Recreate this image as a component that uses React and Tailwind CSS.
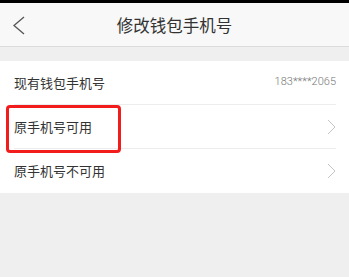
import React from "react";

function Chevron() {
    return (
        <svg width="9" height="16" viewBox="0 0 9 16" className="shrink-0">
            <path d="M1 1 L8 8 L1 15" fill="none" stroke="#c4c4c4" strokeWidth="1" />
        </svg>
    );
}

function Row({ label, right, last, children }) {
    return (
        <div className="relative pl-[14px] pr-[13px]">
            <div
                className={
                    "flex h-[44px] items-center justify-between " +
                    (last ? "" : "border-b border-[#ececec]")
                }
            >
                <span className="text-[13px] text-[#333]">{label}</span>
                {right}
            </div>
            {children}
        </div>
    );
}

export default function App() {
    return (
        <div
            className="min-h-[277px] w-[349px] bg-[#efefef]"
            style={{ fontFamily: '"Noto Sans CJK SC", "Noto Sans", sans-serif' }}
        >
            <div className="h-[3px] bg-black" />
            <div className="relative flex h-[44px] items-center justify-center border-b border-[#dcdcdc] bg-[#f8f8f8]">
                <button className="absolute left-[12px] top-[13px]">
                    <svg width="14" height="19" viewBox="0 0 14 19">
                        <path d="M12 1 L2 9.5 L12 18" fill="none" stroke="#555" strokeWidth="1.3" />
                    </svg>
                </button>
                <h1 className="pt-[2px] text-[16.5px] text-[#333]">修改钱包手机号</h1>
            </div>

            <div className="mt-[14px] bg-white">
                <Row
                    label="现有钱包手机号"
                    right={
                        <span
                            className="text-[11px] text-[#777]"
                            style={{ fontFamily: '"Roboto", sans-serif', fontWeight: 300 }}
                        >
                            183****2065
                        </span>
                    }
                />
                <Row label="原手机号可用" right={<Chevron />}>
                    <div className="absolute left-[6px] top-0 z-10 h-[48px] w-[115px] rounded-[4px] border-[3px] border-[#f21c1c]" />
                </Row>
                <Row label="原手机号不可用" right={<Chevron />} last />
            </div>
        </div>
    );
}
